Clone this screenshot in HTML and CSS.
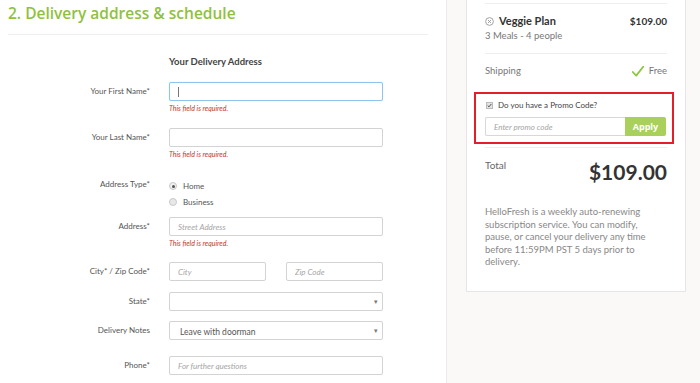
FILE: index.html
```html
<!DOCTYPE html>
<html>
<head>
<meta charset="utf-8">
<link rel="stylesheet" href="styles.css">
</head>
<body>
<div class="page">
  <main class="left">
    <h1 class="title">2. Delivery address &amp; schedule</h1>
    <div class="divider"></div>
    <div class="form">
      <div class="row head-row">
        <div class="label"></div>
        <div class="section-head">Your Delivery Address</div>
      </div>
      <div class="row r1">
        <div class="label">Your First Name*</div>
        <div class="field">
          <div class="focus-wrap"><input class="input focused" type="text"></div>
          <div class="error">This field is required.</div>
        </div>
      </div>
      <div class="row r2">
        <div class="label">Your Last Name*</div>
        <div class="field">
          <input class="input" type="text">
          <div class="error">This field is required.</div>
        </div>
      </div>
      <div class="row r3">
        <div class="label label-top">Address Type*</div>
        <div class="field radios">
          <div class="radio-line"><span class="radio on"></span>Home</div>
          <div class="radio-line"><span class="radio"></span>Business</div>
        </div>
      </div>
      <div class="row r4">
        <div class="label">Address*</div>
        <div class="field">
          <input class="input" type="text" placeholder="Street Address">
          <div class="error">This field is required.</div>
        </div>
      </div>
      <div class="row r5">
        <div class="label">City* / Zip Code*</div>
        <div class="field split">
          <input class="input" type="text" placeholder="City">
          <input class="input" type="text" placeholder="Zip Code">
        </div>
      </div>
      <div class="row r6">
        <div class="label">State*</div>
        <div class="field">
          <div class="select"><span></span><span class="caret">&#9662;</span></div>
        </div>
      </div>
      <div class="row r7">
        <div class="label">Delivery Notes</div>
        <div class="field">
          <div class="select"><span class="sel-text">Leave with doorman</span><span class="caret">&#9662;</span></div>
        </div>
      </div>
      <div class="row r8">
        <div class="label">Phone*</div>
        <div class="field">
          <input class="input" type="text" placeholder="For further questions">
        </div>
      </div>
    </div>
  </main>
  <aside class="side">
    <div class="card">
      <div class="sec plan">
        <div class="plan-line">
          <span class="plan-name">
            <svg class="remove" width="9" height="9" viewBox="0 0 10 10"><circle cx="5" cy="5" r="4.3" fill="none" stroke="#999" stroke-width="1"/><path d="M3.3 3.3 L6.7 6.7 M6.7 3.3 L3.3 6.7" stroke="#999" stroke-width="1"/></svg>
            Veggie Plan
          </span>
          <span class="plan-price">$109.00</span>
        </div>
        <div class="plan-sub">3 Meals - 4 people</div>
      </div>
      <div class="sec ship">
        <span>Shipping</span>
        <span class="free">
          <svg width="12" height="11" viewBox="0 0 12 11"><path d="M0.8 6 L4.2 9.6 L11.2 0.8" fill="none" stroke="#8cc63f" stroke-width="1.8" stroke-linecap="round" stroke-linejoin="round"/></svg>
          Free
        </span>
      </div>
      <div class="promo">
        <div class="promo-check"><span class="checkbox"><svg width="7" height="7" viewBox="0 0 7 7"><path d="M1 3.6 L2.8 5.4 L6 1.4" fill="none" stroke="#444" stroke-width="1.3"/></svg></span>Do you have a Promo Code?</div>
        <div class="promo-row">
          <input class="promo-input" type="text" placeholder="Enter promo code">
          <button class="apply">Apply</button>
        </div>
      </div>
      <div class="sec total">
        <span class="total-label">Total</span>
        <span class="total-price">$109.00</span>
      </div>
      <p class="note">HelloFresh is a weekly auto-renewing subscription service. You can modify, pause, or cancel your delivery any time before 11:59PM PST 5 days prior to delivery.</p>
    </div>
  </aside>
</div>
</body>
</html>
```
FILE: styles.css
```css
* { box-sizing: border-box; }
html, body { margin: 0; padding: 0; }
body {
  background: #faf9f7;
  font-family: Lato, "Open Sans", sans-serif;
  color: #555;
  height: 383px;
  overflow: hidden;
}
.page {
  display: flex;
  align-items: stretch;
  min-height: 383px;
}
.left {
  width: 447px;
  background: #fff;
  border-right: 1px solid #ebebeb;
  padding: 0 18px 0 8px;
}
.title {
  margin: 0;
  font-family: "Open Sans", sans-serif;
  font-weight: 600;
  font-size: 15.5px;
  line-height: 24px;
  color: #8fc13f;
  padding-top: 1px;
}
.divider {
  margin-top: 9px;
  border-top: 1px solid #efefef;
  width: 420px;
}
.form { display: flex; flex-direction: column; }
.row {
  display: grid;
  grid-template-columns: 142px 214px;
  column-gap: 19px;
}
.label {
  text-align: right;
  font-size: 8px;
  line-height: 19px;
  color: #555;
}
.label-top { line-height: 12px; }
.section-head {
  font-size: 9.5px;
  font-weight: 700;
  color: #444;
  line-height: 12px;
}
.head-row { margin-top: 21px; }
.r1 { margin-top: 14px; }
.r2 { margin-top: 15px; }
.r3 { margin-top: 19px; }
.r4 { margin-top: 7px; }
.r5 { margin-top: 14px; }
.r6 { margin-top: 11px; }
.r7 { margin-top: 10px; }
.r8 { margin-top: 16px; }
.input {
  display: block;
  width: 100%;
  height: 19px;
  border: 1px solid #d3d3d3;
  border-radius: 2px;
  padding: 0 8px;
  font-family: Lato, sans-serif;
  font-size: 8px;
  outline: none;
  background: #fff;
}
.input::placeholder { color: #a5a5a5; font-style: italic; }
.focus-wrap { position: relative; }
.focus-wrap::after {
  content: "";
  position: absolute;
  left: 9px;
  top: 5px;
  width: 1px;
  height: 10px;
  background: #777;
}
.input.focused { border-color: #8fc4ef; box-shadow: 0 0 1px #b7dbf7; }
.error {
  margin-top: 2px;
  font-size: 7px;
  line-height: 10px;
  font-style: italic;
  color: #c0392b;
}
.radios { display: flex; flex-direction: column; }
.radio-line {
  display: flex;
  align-items: center;
  height: 16px;
  font-size: 8px;
  color: #555;
}
.radio {
  width: 8px;
  height: 8px;
  border-radius: 50%;
  border: 1px solid #c8c8c8;
  background: #e8e8e8;
  margin-right: 6px;
  position: relative;
}
.radio.on { background: #f0f0f0; }
.radio.on::after {
  content: "";
  position: absolute;
  left: 1.5px;
  top: 1.5px;
  width: 3px;
  height: 3px;
  border-radius: 50%;
  background: #555;
}
.split { display: flex; justify-content: space-between; }
.split .input { width: 97px; }
.select {
  height: 19px;
  border: 1px solid #d3d3d3;
  border-radius: 2px;
  display: flex;
  align-items: center;
  justify-content: space-between;
  padding: 0 4px 0 10px;
  font-size: 8.5px;
  color: #555;
  background: #fff;
}
.caret { font-size: 7px; color: #777; }
.sel-text { padding-top: 2px; }

.side { padding-left: 19px; }
.card {
  width: 220px;
  margin-top: -10px;
  background: #fff;
  border: 1px solid #e6e6e6;
  padding: 12px 18px 22px 18px;
}
.sec { border-top: 1px solid #eeeeee; }
.plan { padding: 10px 0 11px; }
.plan-line {
  display: flex;
  justify-content: space-between;
  align-items: center;
  line-height: 14px;
}
.plan-name {
  display: flex;
  align-items: center;
  font-size: 11px;
  font-weight: 700;
  color: #333;
}
.remove { margin: 0 5px 0 0; }
.plan-price { font-size: 10px; font-weight: 700; color: #333; }
.plan-sub { margin-top: 2px; font-size: 9.5px; line-height: 12px; color: #777; }
.ship {
  display: flex;
  justify-content: space-between;
  align-items: center;
  padding: 10px 0 9px;
  line-height: 14px;
  font-size: 9.5px;
  color: #777;
}
.free { display: flex; align-items: center; gap: 5px; }
.promo {
  margin: 5px -7px 0 -11px;
  border: 2px solid #e3202a;
  padding: 5px 6px 6px 9px;
}
.promo-check {
  display: flex;
  align-items: center;
  font-size: 8px;
  line-height: 12px;
  color: #444;
}
.checkbox {
  width: 7px;
  height: 7px;
  border: 1px solid #bbb;
  background: #e4e4e4;
  margin: 0 5px 0 1px;
  display: flex;
  align-items: center;
  justify-content: center;
}
.checkbox svg { display: block; }
.promo-row { display: flex; margin-top: 6px; }
.promo-input {
  width: 140px;
  height: 19px;
  border: 1px solid #d8d8d8;
  border-right: none;
  border-radius: 2px 0 0 2px;
  padding: 0 8px;
  font-size: 8px;
  font-family: Lato, sans-serif;
  outline: none;
}
.promo-input::placeholder { color: #a5a5a5; font-style: italic; }
.apply {
  width: 41px;
  height: 19px;
  border: none;
  border-radius: 0 2px 2px 0;
  background: #a8d05a;
  color: #fff;
  font-family: "Open Sans", sans-serif;
  font-weight: 700;
  font-size: 9px;
  padding: 0;
}
.total {
  margin-top: 3px;
  display: flex;
  justify-content: space-between;
  align-items: flex-start;
  padding-top: 10px;
}
.total-label { font-size: 10px; line-height: 14px; color: #666; }
.total-price {
  font-size: 21px;
  font-weight: 700;
  color: #333;
  line-height: 24px;
  margin-top: 2px;
}
.note {
  margin: 22px 0 0;
  width: 170px;
  font-size: 9.5px;
  line-height: 12.5px;
  color: #888;
}
```
